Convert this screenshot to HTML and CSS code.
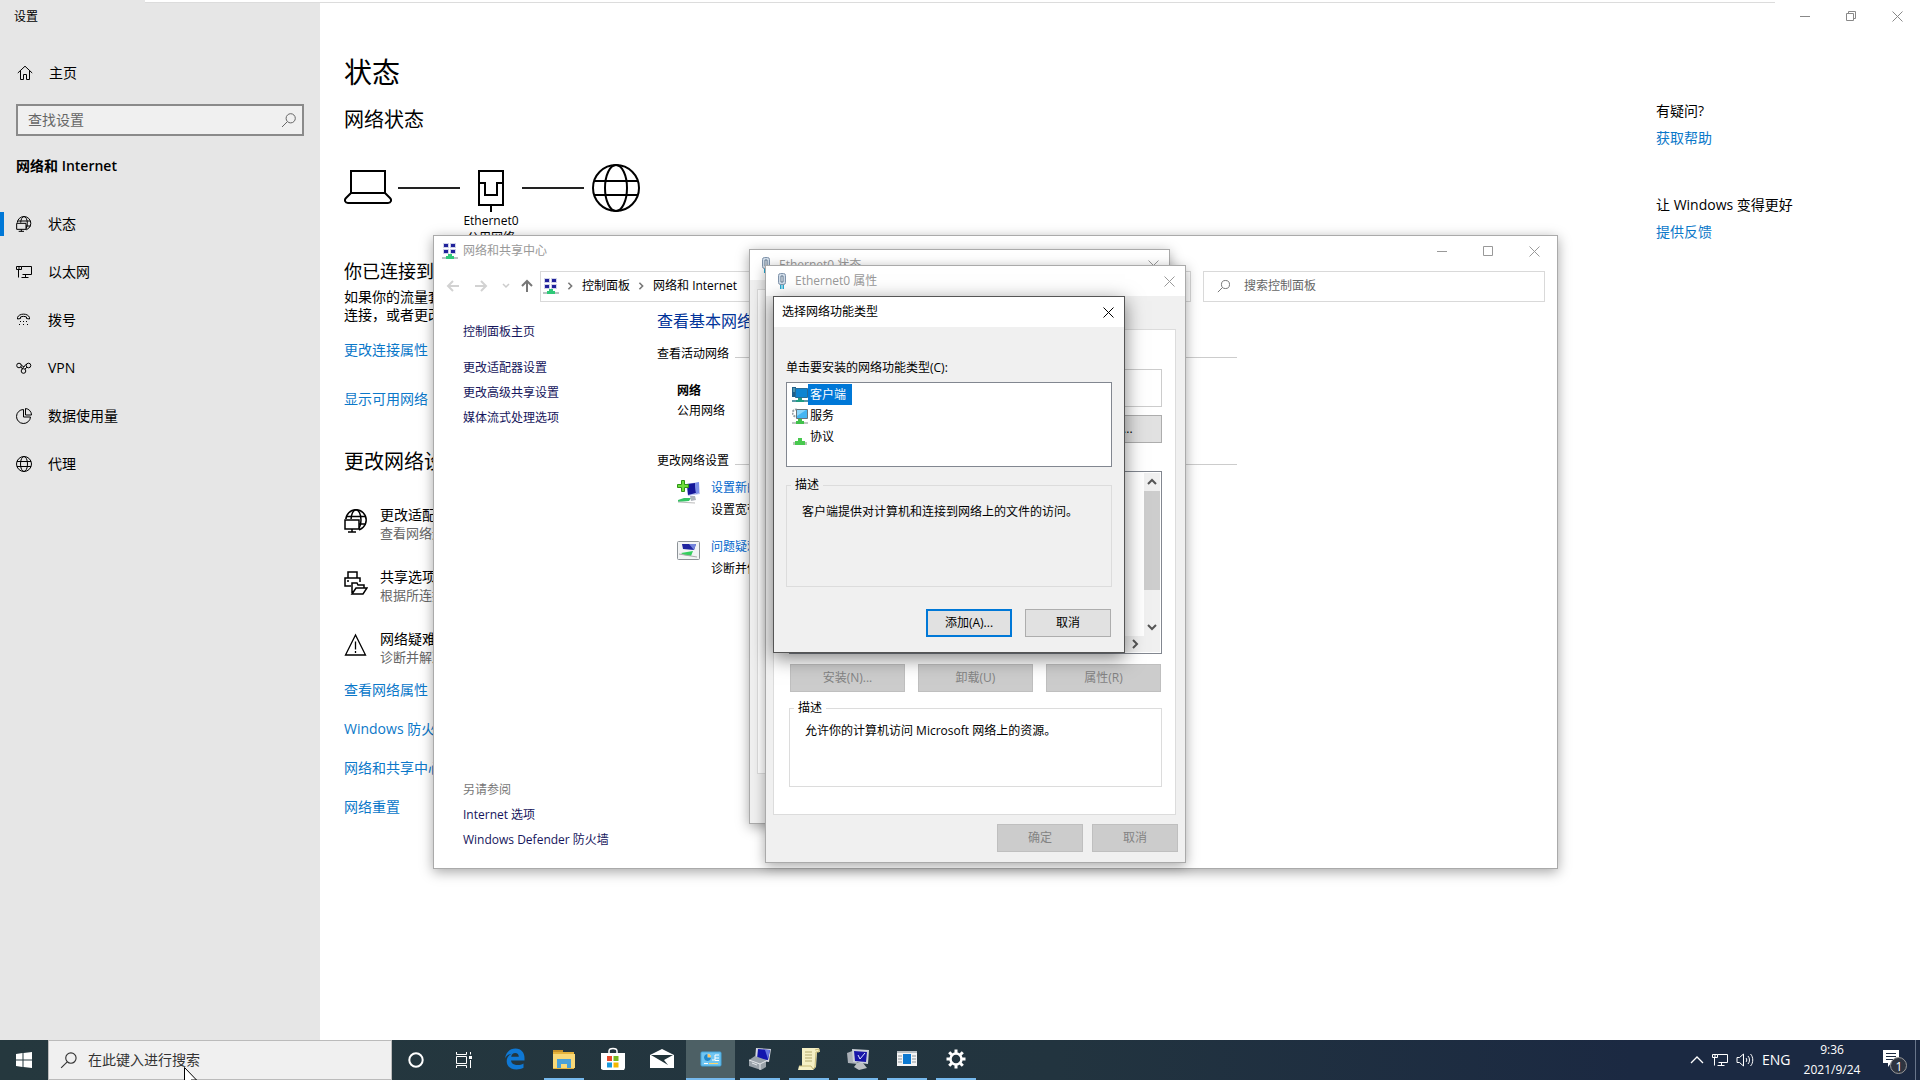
FILE: index.html
```html
<!DOCTYPE html>
<html lang="zh-CN">
<head>
<meta charset="utf-8">
<title>设置</title>
<link rel="stylesheet" href="styles.css">
</head>
<body>
<svg class="sprite" aria-hidden="true">
  <symbol id="close" viewBox="0 0 11 11"><path d="M.5.5l10 10M10.500.5l-10 10" fill="none" stroke="currentColor"/></symbol>
  <symbol id="minimize" viewBox="0 0 11 11"><path d="M0 5.500h10" stroke="currentColor"/></symbol>
  <symbol id="maximize" viewBox="0 0 11 11"><path d="M.5.5h9v9h-9z" fill="none" stroke="currentColor"/></symbol>
  <symbol id="restore" viewBox="0 0 11 11"><path d="M.5 2.500h7v7h-7zM2.500 2.500v-2h7v7h-2" fill="none" stroke="currentColor"/></symbol>
  <symbol id="search" viewBox="0 0 16 16"><path d="M6.200 9.800L1 15" fill="none" stroke="currentColor"/><circle cx="9.700" cy="6.300" r="4.600" fill="none" stroke="currentColor"/></symbol>
  <symbol id="globe" viewBox="0 0 48 48"><g fill="none" stroke="currentColor" stroke-width="2"><circle cx="24" cy="24" r="23"/><ellipse cx="24" cy="24" rx="11" ry="23"/><path d="M2 17h44M2 31h44"/></g></symbol>
  <symbol id="globe-small" viewBox="0 0 16 16"><g fill="none" stroke="currentColor"><circle cx="8" cy="8" r="7.500"/><ellipse cx="8" cy="8" rx="3.500" ry="7.500"/><path d="M1 5.500h14M1 10.500h14"/></g></symbol>
  <symbol id="globe-pc" viewBox="0 0 24 24"><g fill="none" stroke="currentColor" stroke-width="1.500"><circle cx="12" cy="11" r="10.200"/><ellipse cx="12" cy="11" rx="5" ry="10.200"/><path d="M2.500 7.500h19M3 15h19"/><path class="cutout" stroke="none" d="M0 10h15v13H0z"/><path d="M1 11h14v9H1zM8 20v3M4 23h8"/></g></symbol>
  <symbol id="ethernet" viewBox="0 0 16 16"><path d="M5.500 2.500h10v8h-9M5.500 13.500h7M9.500 10.500v3M.5 2.500h5v3H.5zM2 4h2M2.500 5.500v8" fill="none" stroke="currentColor"/></symbol>
  <symbol id="network-center" viewBox="0 0 16 16"><path d="M0 14h16v2H0z" fill="#b9c3c4"/><path d="M6 11h4v2h2v3H4v-3h2z" fill="#2fc978"/><g fill="#d0d3e8"><path d="M1 0h6v5H1zM8 0h6v5H8zM1 6h6v5H1zM8 6h6v5H8z"/></g><g fill="#20229b"><path d="M2 1h4v3H2zM9 1h4v3H9zM2 7h4v3H2zM9 7h4v3H9z"/></g></symbol>
  <symbol id="plug" viewBox="0 0 10 16"><path d="M3 11h1.500v5H3zM5.500 11H7v5H5.500z" fill="#27a9d1"/><rect x="1.500" y=".5" width="7" height="11" rx="2" fill="#cfdbe8" stroke="#8094ab"/><path d="M4 3v6h2V3z" fill="#fff" stroke="#62788f"/></symbol>
  <symbol id="chevron" viewBox="0 0 10 10"><path d="M3 1l4 4-4 4" fill="none" stroke="currentColor" stroke-width="2"/></symbol>
</svg>

<main class="desktop">
  <section class="settings" aria-label="设置">
    <nav class="side">
      <p class="side-title">设置</p>
      <a class="side-item home" href="#"><svg width="16" height="16" viewBox="0 0 16 16"><path d="M.8 8L8 1.200 15.200 8M3.500 6v8.500h3v-5h3v5h3V6" fill="none" stroke="currentColor"/></svg>主页</a>
      <label class="find"><input type="text" placeholder="查找设置" aria-label="查找设置"><svg width="16" height="16"><use href="#search"/></svg></label>
      <h2 class="side-head">网络和 Internet</h2>
      <ul class="side-list">
        <li><a class="side-item current" href="#"><svg width="16" height="16"><use href="#globe-pc"/></svg>状态</a></li>
        <li><a class="side-item" href="#"><svg width="16" height="16"><use href="#ethernet"/></svg>以太网</a></li>
        <li><a class="side-item" href="#"><svg width="16" height="16" viewBox="0 0 16 16"><path d="M1.500 5.500C3 1 12 1 13.500 5.500v1.500l-3-.5V5c-2-.8-4-.8-6 0v1.500l-3 .5z" fill="none" stroke="currentColor"/><path d="M4 9.500h1m2 0h1m2 0h1M3 12.500h1m3 0h1m3 0h1" stroke="currentColor"/></svg>拨号</a></li>
        <li><a class="side-item" href="#"><svg width="16" height="16" viewBox="0 0 16 16"><g fill="none" stroke="currentColor"><circle cx="3" cy="5.500" r="2.300"/><circle cx="7.500" cy="11" r="2.300"/><circle cx="12.500" cy="5.500" r="2.300"/><path d="M5 4.500l2.500 2.500L10.500 4M4.800 6.800l1.500 2M9 9l2-1.800M6 9l2.500-3"/></g></svg>VPN</a></li>
        <li><a class="side-item" href="#"><svg width="16" height="16" viewBox="0 0 16 16"><path d="M7.500 1.500A7 7 0 1 0 14.500 9h-7zM9.500.5V7h6A6.500 6.500 0 0 0 9.500.5z" fill="none" stroke="currentColor"/></svg>数据使用量</a></li>
        <li><a class="side-item" href="#"><svg width="16" height="16"><use href="#globe-small"/></svg>代理</a></li>
      </ul>
    </nav>

    <div class="status">
      <h1>状态</h1>
      <h2 class="sub first">网络状态</h2>
      <div class="diagram">
        <svg width="48" height="48" viewBox="0 0 48 48"><path d="M7 7h34v22H7zM7 29l-5 5c-2 2-1 5 2 5h40c3 0 4-3 2-5l-5-5" fill="none" stroke="#000" stroke-width="2"/></svg>
        <i class="wire"></i>
        <div class="adapter">
          <svg width="28" height="48" viewBox="0 0 28 48"><path d="M2 7h24v34H2zM2 19h6v12h12V19h6M14 41v7" fill="none" stroke="#000" stroke-width="2"/></svg>
          <span>Ethernet0</span><span>公用网络</span>
        </div>
        <i class="wire last"></i>
        <svg width="48" height="48"><use href="#globe"/></svg>
      </div>
      <h3 class="connected">你已连接到 Internet</h3>
      <p class="plan">如果你的流量套餐有限制，则你可以将此网络设置为按流量计费的连接，或者更改其他属性。</p>
      <a class="link gap-a" href="#">更改连接属性</a>
      <a class="link gap-b" href="#">显示可用网络</a>
      <h2 class="sub">更改网络设置</h2>
      <ul class="options">
        <li><svg width="24" height="24"><use href="#globe-pc"/></svg><div><b>更改适配器选项</b><small>查看网络适配器并更改连接设置。</small></div></li>
        <li><svg width="24" height="24" viewBox="0 0 24 24"><path d="M4 7V1h9v6M7 15H1V7h15v4M3 10h2M8 22V12h5l1 2h6v3M8 23l4-6h11l-4 6z" fill="none" stroke="#000" stroke-width="1.500"/></svg><div><b>共享选项</b><small>根据所连接到的网络，决定要共享的内容。</small></div></li>
        <li><svg width="24" height="24" viewBox="0 0 24 24"><path d="M11.500 2L1.500 22h20zM11.500 8.500v8M11.500 18v2" fill="none" stroke="#000" stroke-width="1.300"/></svg><div><b>网络疑难解答</b><small>诊断并解决网络问题。</small></div></li>
      </ul>
      <div class="links">
        <a class="link" href="#">查看网络属性</a>
        <a class="link" href="#">Windows 防火墙</a>
        <a class="link" href="#">网络和共享中心</a>
        <a class="link" href="#">网络重置</a>
      </div>
    </div>

    <div class="right">
      <div class="caption gray">
        <button aria-label="最小化"><svg width="11" height="11"><use href="#minimize"/></svg></button>
        <button aria-label="还原"><svg width="11" height="11"><use href="#restore"/></svg></button>
        <button aria-label="关闭"><svg width="11" height="11"><use href="#close"/></svg></button>
      </div>
      <aside class="help">
        <p>有疑问?</p><a class="link" href="#">获取帮助</a>
        <p class="better">让 Windows 变得更好</p><a class="link" href="#">提供反馈</a>
      </aside>
    </div>
  </section>
  <div class="edge-strip"></div>

  <section class="window panel" aria-label="网络和共享中心">
    <header class="bar inactive"><svg width="16" height="16"><use href="#network-center"/></svg><span>网络和共享中心</span>
      <div class="caption">
        <button aria-label="最小化"><svg width="11" height="11"><use href="#minimize"/></svg></button>
        <button aria-label="最大化"><svg width="11" height="11"><use href="#maximize"/></svg></button>
        <button aria-label="关闭"><svg width="11" height="11"><use href="#close"/></svg></button>
      </div>
    </header>
    <div class="toolbar">
      <div class="arrows">
        <svg width="14" height="14" viewBox="0 0 14 14"><path d="M13 7H2M7 2L2 7l5 5" fill="none" stroke="#d2d2d2" stroke-width="2"/></svg>
        <svg width="14" height="14" viewBox="0 0 14 14"><path d="M1 7h11M7 2l5 5-5 5" fill="none" stroke="#d2d2d2" stroke-width="2"/></svg>
        <svg width="8" height="8" viewBox="0 0 8 8"><path d="M1 2l3 3 3-3" fill="none" stroke="#ccc" stroke-width="1.500"/></svg>
        <svg width="14" height="14" viewBox="0 0 14 14"><path d="M7 13V2M2 7l5-5 5 5" fill="none" stroke="#777" stroke-width="2"/></svg>
      </div>
      <div class="address">
        <svg width="16" height="16"><use href="#network-center"/></svg>
        <svg class="sep" width="8" height="8"><use href="#chevron"/></svg><span>控制面板</span>
        <svg class="sep" width="8" height="8"><use href="#chevron"/></svg><span>网络和 Internet</span>
      </div>
      <label class="panel-search"><svg width="14" height="14"><use href="#search"/></svg><input type="text" placeholder="搜索控制面板" aria-label="搜索控制面板"></label>
    </div>
    <div class="panel-body">
      <nav class="tasks">
        <a class="task-home" href="#">控制面板主页</a>
        <a href="#">更改适配器设置</a>
        <a href="#">更改高级共享设置</a>
        <a href="#">媒体流式处理选项</a>
        <span class="also">另请参阅</span>
        <a href="#">Internet 选项</a>
        <a href="#">Windows Defender 防火墙</a>
      </nav>
      <div class="info">
        <h2>查看基本网络信息并设置连接</h2>
        <h3 class="ruled">查看活动网络</h3>
        <p class="net"><b>网络</b><span>公用网络</span></p>
        <h3 class="ruled">更改网络设置</h3>
        <ul class="wizards">
          <li><svg width="24" height="24" viewBox="0 0 24 24"><path d="M9 4l13-2 1 12-12 2z" fill="#b9c4f0"/><path d="M10 4l8-1 1 10-8 2z" fill="#15179a"/><path d="M18 3l4-1v11l-3 1z" fill="#7d90e8"/><path d="M1 20l6-2h7l-2 3-11 1z" fill="#34c463"/><path d="M13 16h5l1 4-5 1z" fill="#aeb4bc"/><path d="M1 22l17 1" stroke="#bbb"/><path d="M4.500.5h3v4h4v3h-4v4h-3v-4h-4v-3h4z" fill="#6ddf3c" stroke="#2e9417"/></svg><div><a href="#">设置新的连接或网络</a><span>设置宽带、拨号或 VPN 连接。</span></div></li>
          <li><svg width="24" height="24" viewBox="0 0 24 24"><rect x=".5" y="2.500" width="22" height="18" rx="1" fill="#f2f4f5" stroke="#8d9398"/><path d="M5 5h14l-2 6-11-1z" fill="#2025a0"/><path d="M12 5h7l-2 6z" fill="#7485dc"/><path d="M4 14l12-2-2 5-7-1z" fill="#34cf5e"/><path d="M2 15l18 3" stroke="#aaa"/></svg><div><a href="#">问题疑难解答</a><span>诊断并修复网络问题，或者获得疑难解答信息。</span></div></li>
        </ul>
      </div>
    </div>
  </section>

  <section class="window dialog state" aria-label="Ethernet0 状态">
    <header class="bar inactive"><svg width="16" height="16"><use href="#plug"/></svg><span>Ethernet0 状态</span>
      <div class="caption"><button aria-label="关闭"><svg width="11" height="11"><use href="#close"/></svg></button></div></header>
    <div class="page"></div>
  </section>

  <section class="window dialog props" aria-label="Ethernet0 属性">
    <header class="bar inactive"><svg width="16" height="16"><use href="#plug"/></svg><span>Ethernet0 属性</span>
      <div class="caption"><button aria-label="关闭"><svg width="11" height="11"><use href="#close"/></svg></button></div></header>
    <div class="page">
      <input class="device" type="text" aria-label="网络连接" readonly>
      <button class="btn configure">配置(C)...</button>
      <div class="items">
        <div class="items-view"></div>
        <div class="vscroll"><svg width="10" height="10" viewBox="0 0 10 10"><path d="M1 7l4-4 4 4" fill="none" stroke="#555" stroke-width="2"/></svg><i></i><svg width="10" height="10" viewBox="0 0 10 10"><path d="M1 3l4 4 4-4" fill="none" stroke="#555" stroke-width="2"/></svg></div>
        <div class="hscroll"><svg width="10" height="10"><use href="#chevron"/></svg></div>
      </div>
      <div class="trio"><button class="btn" disabled>安装(N)...</button><button class="btn" disabled>卸载(U)</button><button class="btn" disabled>属性(R)</button></div>
      <fieldset><legend>描述</legend>允许你的计算机访问 Microsoft 网络上的资源。</fieldset>
    </div>
    <footer><button class="btn" disabled>确定</button><button class="btn" disabled>取消</button></footer>
  </section>

  <section class="window dialog choose" aria-label="选择网络功能类型">
    <header class="bar"><span>选择网络功能类型</span>
      <div class="caption"><button aria-label="关闭"><svg width="11" height="11"><use href="#close"/></svg></button></div></header>
    <div class="choose-body">
      <p id="kind">单击要安装的网络功能类型(C):</p>
      <ul class="kinds" role="listbox" aria-labelledby="kind">
        <li role="option" aria-selected="true"><svg width="16" height="16" viewBox="0 0 16 16"><path d="M0 13h16v2H0z" fill="#5d98a8"/><path d="M6 11h4v2h2v2H4v-2h2z" fill="#209d83"/><path d="M0 0h4v10H0z" fill="#1d5f8c"/><path d="M3.500 1.500h12v9h-12z" fill="#0e84d1" stroke="#286b96"/><path d="M1 2h2M1 4h2" stroke="#8cc"/></svg><span>客户端</span></li>
        <li role="option"><svg width="16" height="16" viewBox="0 0 16 16"><path d="M0 14h16v2H0z" fill="#c0c5c5"/><path d="M6 11h4v2h2v3H4v-3h2z" fill="#41c14b"/><circle cx="4" cy="5" r="3.500" fill="none" stroke="#98a2a8" stroke-width="2" stroke-dasharray="2 1"/><path d="M4.500 1.500h11v9h-11z" fill="#45b5f2" stroke="#66747c"/><path d="M5 2h9L5 8z" fill="#8bd5fa"/></svg><span>服务</span></li>
        <li role="option"><svg width="16" height="16" viewBox="0 0 16 16"><path d="M1 13h14v3H1z" fill="#b9c5b9"/><path d="M6 9h4v3h3v4H3v-4h3z" fill="#48c94e"/></svg><span>协议</span></li>
      </ul>
      <fieldset><legend>描述</legend>客户端提供对计算机和连接到网络上的文件的访问。</fieldset>
    </div>
    <footer><button class="btn default">添加(A)...</button><button class="btn">取消</button></footer>
  </section>
</main>

<footer class="taskbar">
  <button class="start" aria-label="开始"><svg width="16" height="16" viewBox="0 0 16 16"><path d="M0 2l6.500-1v6.500H0zM7.500.9L16 0v7.500H7.500zM0 8.500h6.500V15L0 14zM7.500 8.500H16V16l-8.500-1z" fill="#fff"/></svg></button>
  <label class="task-search"><svg width="18" height="18"><use href="#search"/></svg><input type="text" placeholder="在此键入进行搜索" aria-label="在此键入进行搜索"></label>
  <button class="tool" aria-label="Cortana"><svg width="16" height="16" viewBox="0 0 16 16"><circle cx="8" cy="8" r="6.700" fill="none" stroke="#fff" stroke-width="2"/></svg></button>
  <button class="tool" aria-label="任务视图"><svg width="18" height="18" viewBox="0 0 18 18"><path d="M1.500 1v2.500h10V1M1.500 5.500h10v7h-10zM1.500 17v-2.500h10V17M15.500 1v2.500M15.500 9v8" fill="none" stroke="#fff"/><path d="M14 5h3v3h-3z" fill="#fff"/></svg></button>
  <div class="apps">
    <button aria-label="Edge"><svg width="24" height="24" viewBox="0 0 24 24"><path d="M2 11.500C3 5 7 1.500 12.500 1.500c6 0 9 4.500 9 9.500v2.500H8c.3 3 3 4.500 6.500 4.500 2.300 0 4.500-.6 6-1.600v4.400c-2 1.200-4.500 1.700-7 1.700-6 0-9.800-3.200-9.800-8.300 0-3.300 1.800-6 5-7.500-3.500.3-5.500 2.500-6.700 4.800zM8.200 9.800h7.600c0-2.300-1.300-3.800-3.600-3.800-2.200 0-3.700 1.500-4 3.800z" fill="#0f78d4"/></svg></button>
    <button class="open" aria-label="文件资源管理器"><svg width="24" height="24" viewBox="0 0 24 24"><path d="M1 3h8l2 2h11v17H1z" fill="#e6b33c"/><path d="M1 7h22v14H1z" fill="#f9d978"/><path d="M5 12h14v9h-4v-4H9v4H5z" fill="#4aa0d8"/><path d="M1 3h10v2H1z" fill="#c8922a"/></svg></button>
    <button aria-label="Store"><svg width="24" height="24" viewBox="0 0 24 24"><path d="M8 7V4c0-3.500 8-3.500 8 0v3" fill="none" stroke="#fff" stroke-width="1.500"/><path d="M0 6h24v15l-1 2H2l-2-1z" fill="#fff"/><path d="M6 9h5v5H6z" fill="#e8492b"/><path d="M12.500 9h5v5h-5z" fill="#78b91f"/><path d="M6 15.500h5v5H6z" fill="#1999dc"/><path d="M12.500 15.500h5v5h-5z" fill="#f5b800"/></svg></button>
    <button aria-label="邮件"><svg width="24" height="24" viewBox="0 0 24 24"><path d="M0 8l12-6 12 6v13H0z" fill="#fff"/><path d="M1 8h22l-9 5 4 5z" fill="#22353b"/></svg></button>
    <button class="open active" aria-label="控制面板"><svg width="22" height="22" viewBox="0 0 22 22"><rect x="1" y="4" width="20" height="14" rx="1" fill="#6fc5f2" stroke="#45a5dc"/><circle cx="7.500" cy="9.500" r="3.500" fill="#d9f0fc"/><path d="M7.500 9.500V6a3.500 3.500 0 0 1 3.500 3.500z" fill="#ffc55c"/><path d="M7.500 9.500V6A3.500 3.500 0 1 0 11 9.500z" fill="#1f88cc"/><path d="M12 12h3V7h4M15 10h4M15 12.500h4M4 15.500h4" stroke="#fff" fill="none"/><path d="M9 15.500h9" stroke="#ffd56b"/></svg></button>
    <button class="open" aria-label="服务器"><svg width="24" height="24" viewBox="0 0 24 24"><path d="M8 1l15 1-2 13-14-2z" fill="#d5d8e2"/><path d="M10 2l12 1-2 10-11-1z" fill="#1215ae"/><path d="M17 3l5 0-2 9z" fill="#6575de"/><path d="M1 13l6-4 11 4v7l-5 3-12-4z" fill="#9aa3aa"/><path d="M1 13l11 4v6M12 17l6-3M4 16l5 2" fill="none" stroke="#e4e8eb"/></svg></button>
    <button class="open" aria-label="脚本"><svg width="24" height="24" viewBox="0 0 24 24"><path d="M5 1h17l1 4h-3l-1 15-3 3H1l1-4h3z" fill="#f5efc4"/><path d="M18 3l4-1v3h-3l-1 15-2 2-2-3H2" fill="none" stroke="#c6b977"/><path d="M8 5h7M8 8h7M8 11h7M8 14h7" stroke="#b2a96e"/></svg></button>
    <button class="open" aria-label="系统工具"><svg width="24" height="24" viewBox="0 0 24 24"><path d="M1 6l8-3 2 14-9-1z" fill="#aab0b7"/><path d="M6 2l17 1-1 14-15-2z" fill="#cbd0d8"/><path d="M8 4l13 1-1 10-11-1z" fill="#1714a8"/><path d="M12 8l2 4 5-6" fill="none" stroke="#dce4ff"/><path d="M11 16h6l4 5-8 2-5-3z" fill="#babfc2"/></svg></button>
    <button class="open" aria-label="运行"><svg width="22" height="22" viewBox="0 0 22 22"><path d="M1 3h20v15H1z" fill="#f4f4f4"/><path d="M1 3h20v2H1z" fill="#b9bfc4"/><path d="M7 6h8v10H7z" fill="#0c78d0"/><path d="M2 8h4M2 11h4M2 14h4M16 8h4M16 11h4M16 14h4" stroke="#8d959a"/></svg></button>
    <button class="open" aria-label="设置"><svg width="22" height="22" viewBox="-11 -11 22 22"><circle r="5.500" fill="none" stroke="#fff" stroke-width="2.500"/><g stroke="#fff" stroke-width="3"><path d="M0-6v-3.500M0 6v3.500M6 0h3.500M-6 0h-3.500M4.300-4.300l2.500-2.500M-4.300 4.300l-2.500 2.500M4.300 4.300l2.500 2.500M-4.300-4.300l-2.500-2.500"/></g></svg></button>
  </div>
  <div class="tray">
    <svg width="14" height="14" viewBox="0 0 14 14"><path d="M1 10l6-6 6 6" fill="none" stroke="#fff" stroke-width="1.300"/></svg>
    <svg width="16" height="16"><use href="#ethernet"/></svg>
    <svg width="18" height="16" viewBox="0 0 18 16"><path d="M1 5.500h2.500l4-3.500v12l-4-3.500H1zM10 6c1 1 1 3 0 4M12 4c2 2 2 6 0 8M14.500 2c3 3 3 9 0 12" fill="none" stroke="#fff"/></svg>
    <span class="lang">ENG</span>
    <time class="clock"><span>9:36</span><span>2021/9/24</span></time>
    <button class="notes" aria-label="通知"><svg width="26" height="28" viewBox="0 0 26 28"><path d="M1 4h16v13H9l-3 4v-4H1z" fill="#fff"/><path d="M4 7.500h10M4 10.500h10M4 13.500h7" stroke="#1c2a40"/><circle cx="16.500" cy="19.500" r="8" fill="#2e3440" stroke="#999"/></svg><span>1</span></button>
  </div>
  <svg class="cursor" width="14" height="20" viewBox="0 0 14 20"><path d="M.5.5v17l4-4 3 6 2.500-1.200-3-5.300h5.500z" fill="#fff" stroke="#000"/></svg>
</footer>
</body>
</html>
```
FILE: styles.css
```css
* { box-sizing: border-box; }
body {
  margin: 0;
  min-height: 100vh;
  display: flex;
  flex-direction: column;
  overflow: hidden;
  background: #fff;
  color: #000;
  font: 14px/20px "Open Sans", "Noto Sans CJK SC", sans-serif;
}
h1, h2, h3, p, ul { margin: 0; padding: 0; font-weight: 400; }
ul { list-style: none; }
a { color: inherit; text-decoration: none; }
button, input { font: inherit; color: inherit; margin: 0; padding: 0; border: 0; background: none; }
input { min-width: 0; outline: 0; }
svg { flex: none; display: block; }
.sprite { position: absolute; width: 0; height: 0; }
.cutout { fill: var(--surface, #fff); }

.desktop { position: relative; flex: 1; display: flex; }
.settings { flex: 1; display: flex; }
.edge-strip { position: absolute; left: 145px; right: 145px; top: 0; height: 3px; background: #fff; border-bottom: 1px solid #dcdcdc; }

/* Settings: navigation column */
.side { --surface: #e6e6e6; width: 320px; background: var(--surface); }
.side-title { padding: 7px 14px 5px; font-size: 12px; }
.side-item { position: relative; display: flex; align-items: center; gap: 16px; height: 48px; padding-left: 16px; }
.side-item.home { height: 40px; margin: 21px 0 11px; padding-left: 17px; }
.side-item.current::before { content: ""; position: absolute; left: 0; top: 12px; width: 4px; height: 24px; background: #0078d7; }
.find { display: flex; align-items: center; margin: 0 16px; height: 32px; padding: 0 5px 0 10px; border: 2px solid #8a8a8a; background: #f0f0f0; color: #666; }
.find input { flex: 1; }
input::placeholder { color: inherit; opacity: 1; }
.side-head { margin: 20px 16px 24px; font-size: 14px; font-weight: 600; }

/* Settings: status page */
.status { flex: 1; padding: 52px 24px; }
h1 { font-size: 28px; line-height: 40px; }
.sub { margin-top: 39px; font-size: 20px; line-height: 28px; }
.sub.first { margin-top: 14px; }
.diagram { display: flex; align-items: flex-start; gap: 6px; height: 92px; margin-top: 30px; }
.wire { width: 62px; height: 2px; margin-top: 23px; background: #222; }
.wire.last { margin-right: 2px; }
.adapter { width: 50px; display: flex; flex-direction: column; align-items: center; font-size: 12px; line-height: 17px; white-space: nowrap; }
.connected { margin-top: 2px; font-size: 18px; line-height: 26px; }
.plan { max-width: 412px; margin-top: 4px; line-height: 18px; }
.link { display: block; color: #0b78c9; }
.gap-a { margin-top: 16px; }
.gap-b { margin-top: 29px; }
.options { margin-top: 30px; }
.options li { display: flex; gap: 12px; height: 62px; }
.options b, .options small { display: block; font-weight: 400; font-size: 14px; line-height: 18px; }
.options small { font-size: 13px; color: #666; }
.options svg { margin-top: 3px; }
.links { display: grid; gap: 19px; margin-top: -12px; }
.right { width: 264px; }
.caption { display: flex; margin-left: auto; }
.caption button { width: 46px; height: 30px; display: grid; place-items: center; }
.caption.gray { justify-content: flex-end; color: #888; padding-top: 1px; }
.help { padding-top: 70px; }
.help .link { margin-top: 7px; }
.better { margin-top: 47px; }

/* Windows shared */
.window { position: absolute; display: flex; flex-direction: column; border: 1px solid #aaa; background: #fff; font-size: 12px; line-height: 16px; box-shadow: 0 3px 12px rgba(0, 0, 0, .35); }
.bar { display: flex; align-items: center; height: 30px; padding-left: 8px; gap: 5px; background: #fff; white-space: nowrap; }
.bar.inactive { color: #999; }
.bar .caption button { height: 28px; }
.dialog { background: #f0f0f0; }
.dialog .caption button { width: 31px; }

/* Network and Sharing Center */
.panel { left: 433px; top: 235px; width: 1125px; height: 634px; }
.toolbar { display: flex; align-items: center; height: 42px; padding: 0 12px; margin-top: -1px; }
.arrows { display: flex; align-items: center; width: 94px; gap: 14px; }
.arrows svg:nth-child(3) { margin-right: -4px; }
.address { flex: 1; display: flex; align-items: center; height: 31px; padding: 0 2px; border: 1px solid #d9d9d9; }
.address .sep { margin: 0 8px 0 7px; color: #777; }
.address span { white-space: nowrap; }
.panel-search { display: flex; align-items: center; width: 342px; height: 31px; margin-left: 12px; padding: 0 13px; gap: 13px; border: 1px solid #d9d9d9; color: #666; }
.panel-search input { flex: 1; }
.panel-body { flex: 1; display: flex; }
.tasks { width: 223px; padding: 12px 0 16px 29px; display: flex; flex-direction: column; line-height: 25px; color: #15155c; }
.task-home { margin-bottom: 11px; }
.also { margin-top: auto; color: #777; }
.info { width: 580px; padding-top: 4px; }
.info h2 { color: #039; font-size: 16px; line-height: 20px; }
.ruled { display: flex; align-items: center; gap: 6px; font-size: 12px; line-height: 20px; margin-top: 13px; }
.ruled::after { content: ""; flex: 1; height: 1px; margin-top: 6px; background: #ccc; }
.net { margin: 17px 0 30px 20px; line-height: 20px; }
.net b, .net span { display: block; }
.wizards { padding: 8px 0 0 20px; }
.wizards li { display: flex; gap: 10px; height: 59px; }
.wizards svg { margin-top: 1px; }
.wizards a, .wizards span { display: block; line-height: 22px; }
.wizards div { margin-top: -2px; }
.wizards a { color: #0066cc; }

/* Adapter dialogs */
.state { left: 749px; top: 249px; width: 421px; height: 575px; }
.props { left: 765px; top: 265px; width: 421px; height: 598px; }
.page { background: #fff; border: 1px solid #dcdcdc; }
.state .page { flex: 1; margin: 9px 7px 49px; }
.props .page { flex: 1; margin: 33px 9px 0 7px; padding: 39px 13px 0 15px; display: flex; flex-direction: column; }
.device { height: 38px; border: 1px solid #ccc; }
.btn { width: 86px; height: 28px; border: 1px solid #adadad; background: #e1e1e1; }
.btn:disabled { background: #ccc; border-color: #bfbfbf; color: #838383; }
.configure { align-self: flex-end; width: 115px; margin-top: 8px; padding-left: 8px; }
.items { display: grid; grid-template: 1fr 16px / 1fr 16px; height: 183px; margin-top: 28px; padding: 1px; border: 1px solid #828790; }
.vscroll { grid-row: 1; grid-column: 2; display: flex; flex-direction: column; align-items: center; gap: 4px; padding: 4px 0; background: #f0f0f0; }
.vscroll i { width: 16px; height: 99px; background: #cdcdcd; }
.vscroll svg:last-child { margin-top: auto; }
.hscroll { grid-column: 1 / 3; display: flex; align-items: center; justify-content: flex-end; padding-right: 20px; background: #f0f0f0; color: #555; }
.trio { display: flex; justify-content: space-between; margin: 10px 1px 8px; }
.trio .btn { width: 115px; }
fieldset { margin: 0; padding: 7px 15px; border: 1px solid #dcdcdc; }
fieldset legend { margin-left: -11px; padding: 0 4px; }
.props fieldset { height: 87px; }
.dialog footer { display: flex; justify-content: flex-end; gap: 9px; padding: 9px 7px 10px; }

/* Component type dialog */
.choose { left: 773px; top: 296px; width: 352px; height: 357px; border-color: #555; box-shadow: 0 5px 18px rgba(0, 0, 0, .5); }
.choose-body { flex: 1; padding: 33px 12px 0; }
.kinds { height: 85px; margin: 6px 0 10px; padding: 1px 5px; border: 1px solid #828790; background: #fff; }
.kinds li { display: flex; height: 21px; align-items: center; line-height: 21px; }
.kinds span { padding: 0 6px 0 2px; }
.kinds [aria-selected] span { background: #0078d7; color: #fff; }
.choose fieldset { height: 110px; padding: 11px 15px; }
.choose footer { gap: 13px; padding: 0 13px 15px; }
.btn.default { border: 2px solid #0078d7; }

/* Taskbar */
.taskbar { position: relative; display: flex; height: 40px; background: linear-gradient(90deg, #25383e 0, #22343f 55%, #1b2942 85%); color: #fff; }
.taskbar button { display: grid; place-items: center; }
.start, .tool { width: 48px; }
.task-search { display: flex; align-items: center; gap: 10px; width: 344px; padding-left: 11px; border: 1px solid #bbb; background: #f0f0f0; color: #333; }
.task-search input { flex: 1; }
.apps { display: flex; margin-left: 2px; }
.apps button { width: 49px; border-bottom: 2px solid transparent; }
.apps .open { background: linear-gradient(#76b9ed, #76b9ed) center bottom / 40px 2px no-repeat border-box; }
.apps .active { background: linear-gradient(#76b9ed, #76b9ed) center bottom / 49px 2px no-repeat border-box, #4d6065; }
.tray { display: flex; align-items: center; margin-left: auto; padding-right: 4px; gap: 8px; }
.lang { width: 27px; }
.clock { width: 70px; display: grid; text-align: center; font-size: 12px; line-height: 20px; }
.notes { position: relative; width: 41px; height: 40px; border-right: 1px solid #68758a; }
.notes span { position: absolute; left: 18px; top: 18px; width: 12px; font-size: 12px; line-height: 18px; text-align: center; }
.cursor { position: absolute; left: 184px; top: 27px; }
```
